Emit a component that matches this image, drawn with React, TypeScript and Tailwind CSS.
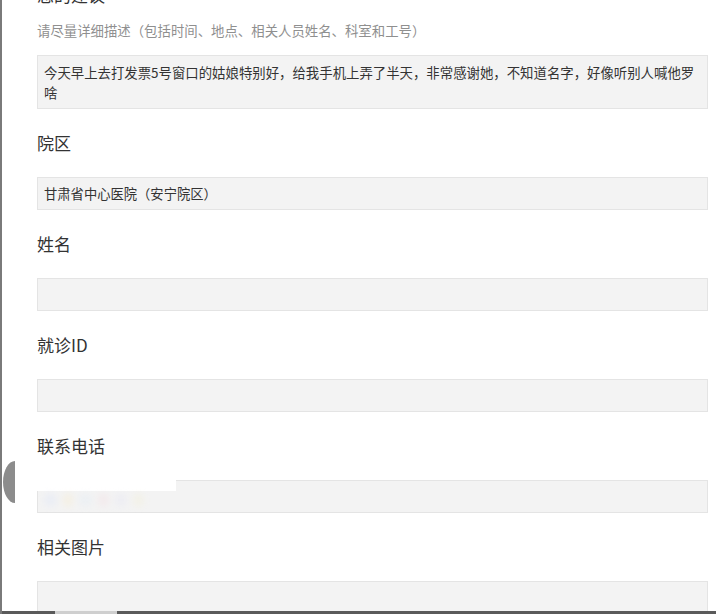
const font = "font-['Noto_Sans_CJK_SC','Noto_Sans',sans-serif]";

function Field({ label, value, children }: { label: string; value?: string; children?: React.ReactNode }) {
  return (
    <div className="mt-[22px]">
      <div className="text-[17px] leading-[24px] text-[#333]">{label}</div>
      <div className="relative mt-[22px] h-[33px] border border-[#e4e4e4] bg-[#f3f3f3] px-[6px] text-[13.3px] leading-[31px] text-[#333]">
        {value}
        {children}
      </div>
    </div>
  );
}

export default function App() {
  return (
    <div className={`relative flex h-[614px] w-[716px] flex-col overflow-hidden border-l-2 border-[#7a7a7a] bg-white ${font}`}>
      <div className="flex-1 overflow-hidden pl-[35px] pr-[8px]">
        {/* suggestion block, title scrolled off the top */}
        <div className="-mt-[17px] text-[17px] leading-[24px] text-[#333]">您的建议</div>
        <div className="mt-[13px] text-[13.4px] leading-[20px] text-[#8f8f8f]">
          请尽量详细描述（包括时间、地点、相关人员姓名、科室和工号）
        </div>
        <div className="mt-[15px] border border-[#e4e4e4] bg-[#f3f3f3] px-[6px] py-[6px] text-[13.4px] leading-[20px] text-[#333]">
          今天早上去打发票5号窗口的姑娘特别好，给我手机上弄了半天，非常感谢她，不知道名字，好像听别人喊他罗
          <br />
          啥
        </div>

        <Field label="院区" value="甘肃省中心医院（安宁院区）" />
        <Field label="姓名" />
        <Field label="就诊ID" />
        <Field label="联系电话">
          {/* blurred-out phone number */}
          <div className="absolute -left-px -top-[3px] h-[13px] w-[139px] bg-white" />
          <div className="absolute left-[6px] top-[12px] flex h-[14px] w-[100px] gap-[6px] opacity-40 blur-[3px]">
            <div className="h-full w-[14px] rounded-full bg-[#dfe6f7]" />
            <div className="h-full w-[12px] rounded-full bg-[#f7ecd0]" />
            <div className="h-full w-[14px] rounded-full bg-[#e3ecf5]" />
            <div className="h-full w-[12px] rounded-full bg-[#f3dfe4]" />
            <div className="h-full w-[14px] rounded-full bg-[#e6e6f3]" />
            <div className="h-full w-[12px] rounded-full bg-[#f2efd9]" />
          </div>
        </Field>
        <Field label="相关图片" />
      </div>

      <div className="flex h-[3px] shrink-0 bg-[#5a5a5a]">
        <div className="ml-[53px] h-full w-[62px] bg-[#cfcfcf]" />
      </div>

      {/* side handle */}
      <svg className="absolute left-[1px] top-[461px]" width="12" height="42" viewBox="0 0 12 42">
        <path d="M12 0 A12 21 0 0 0 12 42 Z" fill="#8c8c8c" />
      </svg>
    </div>
  );
}
